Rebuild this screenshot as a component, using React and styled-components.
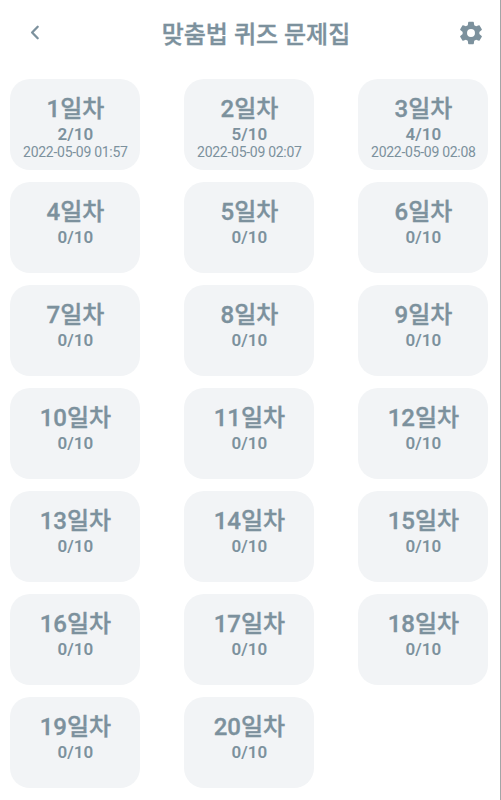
import React from "react";
import styled, { createGlobalStyle } from "styled-components";

const Global = createGlobalStyle`
  * { box-sizing: border-box; }
  body { margin: 0; background: #fff; overflow: hidden; }
`;
const Screen = styled.main`
  width: 501px;
  height: 800px;
  border-right: 1px solid #a3a5a7;
  color: #7c919d;
  font-family: Roboto, "Noto Sans CJK KR", sans-serif;
`;
const Header = styled.header`
  display: grid;
  grid-template-columns: 70px 1fr 58px;
  align-items: center;
  height: 66px;
`;
const Title = styled.h1`
  margin: 0;
  padding-top: 4px;
  text-align: center;
  font-size: 24px;
  line-height: 36px;
  font-weight: 500;
  -webkit-text-stroke: 0.35px currentColor;
  white-space: nowrap;
`;
const IconButton = styled.button`
  display: flex;
  justify-content: center;
  align-items: center;
  padding: 0;
  border: 0;
  background: none;
  color: inherit;
`;
const Grid = styled.section`
  display: grid;
  grid-template-columns: repeat(3, 130px);
  grid-auto-rows: 91px;
  column-gap: 44px;
  row-gap: 12px;
  padding: 13px 0 0 10.4px;
`;
const Card = styled.article`
  display: flex;
  flex-direction: column;
  align-items: center;
  padding-top: 15px;
  border-radius: 20px;
  background: #f2f4f6;
  white-space: nowrap;
`;
const Day = styled.h2`
  margin: 0;
  font-size: 24px;
  line-height: 30px;
  font-weight: 500;
  -webkit-text-stroke: 0.35px currentColor;
`;
const Score = styled.div`
  font-size: 17px;
  line-height: 20px;
  font-weight: 600;
`;
const Stamp = styled.time`
  font-size: 14px;
  line-height: 16px;
  letter-spacing: -0.28px;
`;

const done = {
  1: ["2/10", "2022-05-09 01:57"],
  2: ["5/10", "2022-05-09 02:07"],
  3: ["4/10", "2022-05-09 02:08"],
};
const days = Array.from({ length: 20 }, (_, i) => i + 1);

export default function App() {
  return (
    <Screen>
      <Global />
      <Header>
        <IconButton aria-label="뒤로">
          <svg width="24" height="24" viewBox="0 0 24 24" fill="none" stroke="currentColor" strokeWidth="2.3" strokeLinecap="round" strokeLinejoin="round">
            <path d="M14.7 5.8 9.1 11.5l5.6 5.7" />
          </svg>
        </IconButton>
        <Title>맞춤법 퀴즈 문제집</Title>
        <IconButton aria-label="설정">
          <svg width="28" height="28" viewBox="0 0 24 24" fill="currentColor">
            <path d="M19.14 12.94c.04-.3.06-.61.06-.94 0-.32-.02-.64-.07-.94l2.03-1.58c.18-.14.23-.41.12-.61l-1.92-3.32c-.12-.22-.37-.29-.59-.22l-2.39.96c-.5-.38-1.03-.7-1.62-.94l-.36-2.54c-.04-.24-.24-.41-.48-.41h-3.84c-.24 0-.43.17-.47.41l-.36 2.54c-.59.24-1.13.57-1.62.94l-2.39-.96c-.22-.08-.47 0-.59.22L2.74 8.87c-.12.21-.08.47.12.61l2.03 1.58c-.05.3-.09.63-.09.94s.02.64.07.94l-2.03 1.58c-.18.14-.23.41-.12.61l1.92 3.32c.12.22.37.29.59.22l2.39-.96c.5.38 1.03.7 1.62.94l.36 2.54c.05.24.24.41.48.41h3.84c.24 0 .44-.17.47-.41l.36-2.54c.59-.24 1.13-.56 1.62-.94l2.39.96c.22.08.47 0 .59-.22l1.92-3.32c.12-.22.07-.47-.12-.61l-2.01-1.58zM12 15.4a3.4 3.4 0 1 1 0-6.8 3.4 3.4 0 0 1 0 6.8z" />
          </svg>
        </IconButton>
      </Header>
      <Grid>
        {days.map((n) => (
          <Card key={n}>
            <Day>{n}일차</Day>
            <Score>{done[n] ? done[n][0] : "0/10"}</Score>
            {done[n] && <Stamp>{done[n][1]}</Stamp>}
          </Card>
        ))}
      </Grid>
    </Screen>
  );
}
